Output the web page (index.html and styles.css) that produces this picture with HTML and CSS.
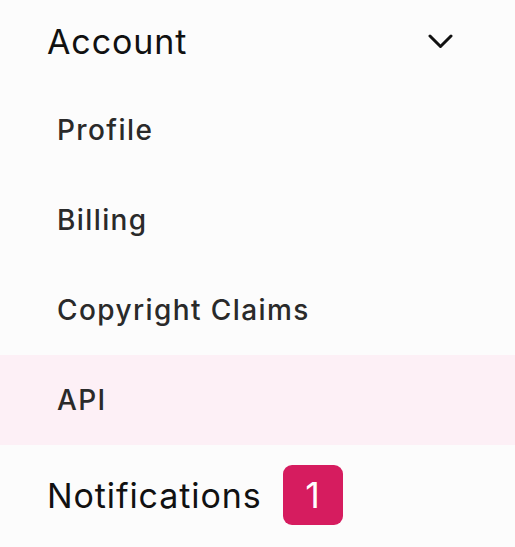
FILE: index.html
```html
<!DOCTYPE html>
<html>
<head>
<meta charset="utf-8">
<link rel="stylesheet" href="styles.css">
</head>
<body>
<nav class="menu">
  <div class="section-head">
    <span class="section-title">Account</span>
    <svg class="chevron" width="25" height="15" viewBox="0 0 25 15"><path d="M2 2 L12.5 12.5 L23 2" fill="none" stroke="#111" stroke-width="3" stroke-linecap="round" stroke-linejoin="round"/></svg>
  </div>
  <ul class="items">
    <li class="item">Profile</li>
    <li class="item">Billing</li>
    <li class="item">Copyright Claims</li>
    <li class="item active">API</li>
  </ul>
  <div class="section-head notif">
    <span class="section-title">Notifications</span>
    <span class="badge">1</span>
  </div>
</nav>
</body>
</html>
```
FILE: styles.css
```css
html, body {
  margin: 0;
  padding: 0;
  background: #fcfcfc;
}
body {
  font-family: Inter, "Noto Sans", sans-serif;
  color: #111;
}
.menu {
  display: flex;
  flex-direction: column;
}
.section-head {
  display: flex;
  align-items: center;
  height: 82px;
  padding: 0 62px 0 47px;
}
.section-title {
  font-size: 34px;
  font-weight: 400;
  letter-spacing: 0.9px;
  flex: 0 0 auto;
}
.chevron {
  margin-left: auto;
  display: block;
}
.items {
  list-style: none;
  margin: 0;
  padding: 3px 0 0;
}
.item {
  height: 90px;
  display: flex;
  align-items: center;
  padding-left: 57px;
  font-size: 28px;
  font-weight: 500;
  color: #2a2a2a;
  letter-spacing: 1.4px;
}
.item.active {
  background: #fdf0f6;
}
.notif {
  height: 100px;
}
.badge {
  margin-left: 21px;
  width: 60px;
  height: 60px;
  border-radius: 9px;
  background: #d61c5f;
  color: #fff;
  font-size: 36px;
  font-weight: 400;
  display: flex;
  align-items: center;
  justify-content: center;
}
```
